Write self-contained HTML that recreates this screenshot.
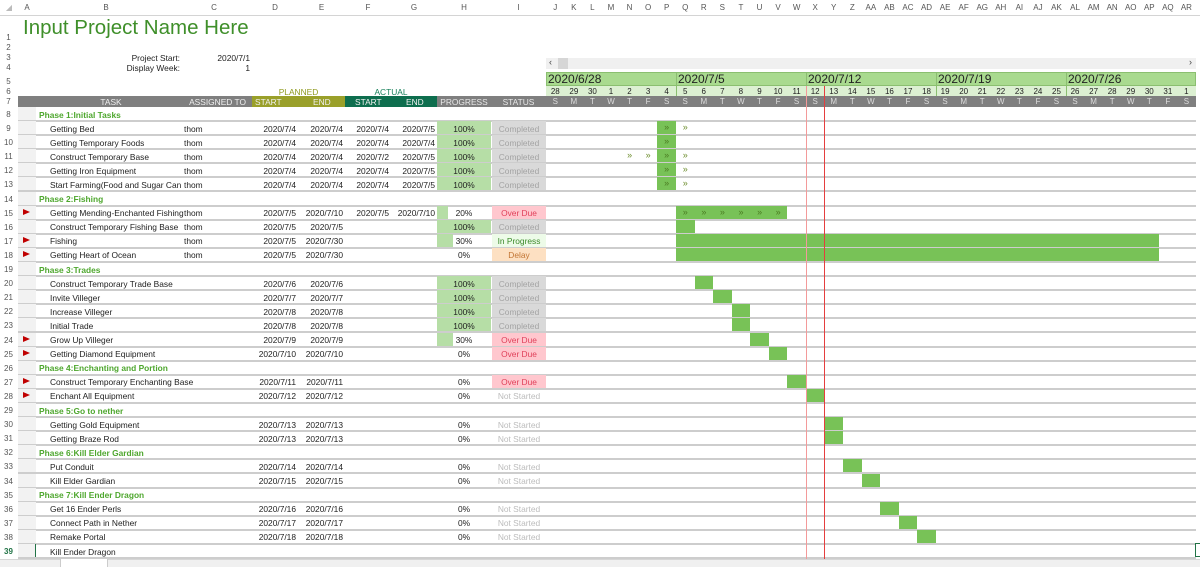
<!DOCTYPE html>
<html><head><meta charset="utf-8"><style>
*{margin:0;padding:0;box-sizing:border-box}
body{width:1200px;height:567px;overflow:hidden;background:#fff;font-family:"Liberation Sans",Tahoma,sans-serif;font-size:8.4px;color:#222;position:relative}
.abs{position:absolute}
.ch{position:absolute;top:0;left:0;width:1200px;height:16px;border-bottom:1px solid #d4d4d4;background:#fff}
.ch > span{position:absolute;top:3px;color:#555;font-size:8px;text-align:center}
.rn{position:absolute;left:0;width:17px;text-align:center;color:#555;font-size:8px}
.r{position:absolute;left:0;width:1200px;height:14.1px}
.r .ln{position:absolute;left:18px;right:4px;bottom:-1px;height:2px;background:#cdcdcd}
.r .A{position:absolute;left:18px;width:18px;top:0;height:100%;background:#f2f2f2}
.r i{position:absolute;left:0;width:17px;text-align:center;color:#555;font-style:normal;top:3px;font-size:8px}
.r b{position:absolute;font-weight:normal;top:2.5px;white-space:nowrap}
.t{left:50px}.a{left:184px}
.d{right:904px}.e{right:857px}.f{right:811px}.g{right:765px}
.ph{left:39px;color:#4ea72e;font-weight:bold!important}
.p{left:437px!important;width:54px;top:0!important;height:13px}
.p s{position:absolute;left:0;top:0;height:13px;background:#b6dea6}
.p u{position:absolute;left:0;width:54px;text-align:center;top:2.5px;text-decoration:none}
.s{left:492px!important;width:54px;top:0!important;height:13px;text-align:center;padding-top:2.5px}
.c{background:#d9d9d9;color:#a3a3a3}.o{background:#ffc7ce;color:#e0405a}.ip{background:#edfbe8;color:#3b8a2a}.dl{background:#fde0c2;color:#c27534}.ns{color:#bcbcbc}
.tri{position:absolute;left:23px;top:3.5px;width:0;height:0;border-left:7px solid #c00000;border-top:3.5px solid transparent;border-bottom:3.5px solid transparent}
em{position:absolute;top:0;height:13px;background:#78c257;font-style:normal;color:#4b7d22;font-size:9px;text-align:center;line-height:13px;width:18.6px}
em.w{background:none;color:#6f8f30}
.gh{position:absolute;left:546px;display:flex}
.gh span{width:18.57px;text-align:center;flex:none}
</style></head><body>
<div class="ch">
<span style="left:0;width:18px;color:#bbb">◢</span>
<span style="left:18px;width:18px">A</span><span style="left:36px;width:140px">B</span><span style="left:176px;width:76px">C</span><span style="left:252px;width:46px">D</span><span style="left:298px;width:47px">E</span><span style="left:345px;width:46px">F</span><span style="left:391px;width:46px">G</span><span style="left:437px;width:54px">H</span><span style="left:491px;width:55px">I</span>
<div class="gh" style="top:3px;color:#555;font-size:8px"><span>J</span><span>K</span><span>L</span><span>M</span><span>N</span><span>O</span><span>P</span><span>Q</span><span>R</span><span>S</span><span>T</span><span>U</span><span>V</span><span>W</span><span>X</span><span>Y</span><span>Z</span><span>AA</span><span>AB</span><span>AC</span><span>AD</span><span>AE</span><span>AF</span><span>AG</span><span>AH</span><span>AI</span><span>AJ</span><span>AK</span><span>AL</span><span>AM</span><span>AN</span><span>AO</span><span>AP</span><span>AQ</span><span>AR</span></div>
</div>
<div class="rn" style="top:33px">1</div><div class="rn" style="top:43px">2</div><div class="rn" style="top:53px">3</div><div class="rn" style="top:63px">4</div><div class="rn" style="top:77px">5</div><div class="rn" style="top:87px">6</div><div class="rn" style="top:97px">7</div>
<div class="abs" style="left:23px;top:16px;font-size:20.5px;color:#3f8f2a">Input Project Name Here</div>
<div class="abs" style="left:60px;width:120px;text-align:right;top:53px">Project Start:</div>
<div class="abs" style="left:60px;width:120px;text-align:right;top:63px">Display Week:</div>
<div class="abs" style="left:190px;width:60px;text-align:right;top:53px">2020/7/1</div>
<div class="abs" style="left:190px;width:60px;text-align:right;top:63px">1</div>
<!-- scrollbar -->
<div class="abs" style="left:546px;top:58px;width:650px;height:11px;background:#f0f0f0"></div>
<div class="abs" style="left:558px;top:58px;width:10px;height:11px;background:#d6d6d6"></div>
<div class="abs" style="left:549px;top:57px;color:#444;font-size:9px">‹</div>
<div class="abs" style="left:1189px;top:57px;color:#444;font-size:9px">›</div>
<!-- weeks -->
<div class="abs" style="left:546px;top:72px;width:650px;height:14px;background:#a9da8f;border:1px solid #8bbf70"></div>
<div class="abs" style="left:546px;top:86px;width:650px;height:10px;background:#dcf0d2"></div>
<div class="abs" style="left:676px;top:72px;width:1px;height:24px;background:#8bbf70"></div>
<div class="abs" style="left:806px;top:72px;width:1px;height:24px;background:#8bbf70"></div>
<div class="abs" style="left:936px;top:72px;width:1px;height:24px;background:#8bbf70"></div>
<div class="abs" style="left:1066px;top:72px;width:1px;height:24px;background:#8bbf70"></div>
<div class="abs" style="left:548px;top:72px;font-size:12px;color:#222">2020/6/28</div>
<div class="abs" style="left:678px;top:72px;font-size:12px;color:#222">2020/7/5</div>
<div class="abs" style="left:808px;top:72px;font-size:12px;color:#222">2020/7/12</div>
<div class="abs" style="left:938px;top:72px;font-size:12px;color:#222">2020/7/19</div>
<div class="abs" style="left:1068px;top:72px;font-size:12px;color:#222">2020/7/26</div>
<div class="gh" style="top:86.5px;font-size:8px"><span>28</span><span>29</span><span>30</span><span>1</span><span>2</span><span>3</span><span>4</span><span>5</span><span>6</span><span>7</span><span>8</span><span>9</span><span>10</span><span>11</span><span>12</span><span>13</span><span>14</span><span>15</span><span>16</span><span>17</span><span>18</span><span>19</span><span>20</span><span>21</span><span>22</span><span>23</span><span>24</span><span>25</span><span>26</span><span>27</span><span>28</span><span>29</span><span>30</span><span>31</span><span>1</span></div>
<div class="abs" style="left:252px;width:93px;text-align:center;top:86.5px;color:#8f9a1f">PLANNED</div>
<div class="abs" style="left:345px;width:92px;text-align:center;top:86.5px;color:#17805a">ACTUAL</div>
<!-- header row 7 -->
<div class="abs" style="left:18px;top:96px;width:1178px;height:11px;background:#7f7f7f"></div>
<div class="abs" style="left:252px;top:96px;width:93px;height:11px;background:#9aa02a"></div>
<div class="abs" style="left:345px;top:96px;width:92px;height:11px;background:#0e6e4e"></div>
<div class="abs" style="top:97px;left:36px;width:150px;text-align:center;color:#f0f0f0">TASK</div>
<div class="abs" style="top:97px;left:176px;width:70px;text-align:right;color:#f0f0f0">ASSIGNED TO</div>
<div class="abs" style="top:97px;left:255px;color:#f0f0f0">START</div>
<div class="abs" style="top:97px;left:313px;color:#f0f0f0">END</div>
<div class="abs" style="top:97px;left:355px;color:#f0f0f0">START</div>
<div class="abs" style="top:97px;left:406px;color:#f0f0f0">END</div>
<div class="abs" style="top:97px;left:437px;width:54px;text-align:center;color:#e8e8e8">PROGRESS</div>
<div class="abs" style="top:97px;left:491px;width:55px;text-align:center;color:#e8e8e8">STATUS</div>
<div class="gh" style="top:97px;color:#ddd;font-size:8px"><span>S</span><span>M</span><span>T</span><span>W</span><span>T</span><span>F</span><span>S</span><span>S</span><span>M</span><span>T</span><span>W</span><span>T</span><span>F</span><span>S</span><span>S</span><span>M</span><span>T</span><span>W</span><span>T</span><span>F</span><span>S</span><span>S</span><span>M</span><span>T</span><span>W</span><span>T</span><span>F</span><span>S</span><span>S</span><span>M</span><span>T</span><span>W</span><span>T</span><span>F</span><span>S</span></div>

<div class="r" style="top:107px"><div class="A"></div><i>8</i><b class="ph">Phase 1:Initial Tasks</b><div class="ln"></div></div>
<div class="r" style="top:121px"><div class="A"></div><i>9</i><b class="t">Getting Bed</b><b class="a">thom</b><b class="d">2020/7/4</b><b class="e">2020/7/4</b><b class="f">2020/7/4</b><b class="g">2020/7/5</b><b class="p"><s style="width:54px"></s><u>100%</u></b><b class="s c">Completed</b><em style="left:657.4px">»</em><em class="w" style="left:676px">»</em><div class="ln"></div></div>
<div class="r" style="top:135.1px"><div class="A"></div><i>10</i><b class="t">Getting Temporary Foods</b><b class="a">thom</b><b class="d">2020/7/4</b><b class="e">2020/7/4</b><b class="f">2020/7/4</b><b class="g">2020/7/4</b><b class="p"><s style="width:54px"></s><u>100%</u></b><b class="s c">Completed</b><em style="left:657.4px">»</em><div class="ln"></div></div>
<div class="r" style="top:149.2px"><div class="A"></div><i>11</i><b class="t">Construct Temporary Base</b><b class="a">thom</b><b class="d">2020/7/4</b><b class="e">2020/7/4</b><b class="f">2020/7/2</b><b class="g">2020/7/5</b><b class="p"><s style="width:54px"></s><u>100%</u></b><b class="s c">Completed</b><em class="w" style="left:620.3px">»</em><em class="w" style="left:638.9px">»</em><em style="left:657.4px">»</em><em class="w" style="left:676px">»</em><div class="ln"></div></div>
<div class="r" style="top:163.3px"><div class="A"></div><i>12</i><b class="t">Getting Iron Equipment</b><b class="a">thom</b><b class="d">2020/7/4</b><b class="e">2020/7/4</b><b class="f">2020/7/4</b><b class="g">2020/7/5</b><b class="p"><s style="width:54px"></s><u>100%</u></b><b class="s c">Completed</b><em style="left:657.4px">»</em><em class="w" style="left:676px">»</em><div class="ln"></div></div>
<div class="r" style="top:177.4px"><div class="A"></div><i>13</i><b class="t">Start Farming(Food and Sugar Can</b><b class="a">thom</b><b class="d">2020/7/4</b><b class="e">2020/7/4</b><b class="f">2020/7/4</b><b class="g">2020/7/5</b><b class="p"><s style="width:54px"></s><u>100%</u></b><b class="s c">Completed</b><em style="left:657.4px">»</em><em class="w" style="left:676px">»</em><div class="ln"></div></div>
<div class="r" style="top:191.5px"><div class="A"></div><i>14</i><b class="ph">Phase 2:Fishing</b><div class="ln"></div></div>
<div class="r" style="top:205.6px"><div class="A"></div><i>15</i><span class="tri"></span><b class="t">Getting Mending-Enchanted Fishing</b><b class="a">thom</b><b class="d">2020/7/5</b><b class="e">2020/7/10</b><b class="f">2020/7/5</b><b class="g">2020/7/10</b><b class="p"><s style="width:11px"></s><u>20%</u></b><b class="s o">Over Due</b><em style="left:676px;width:111.4px;background:#78c257"></em><em style="left:676px;background:none">»</em><em style="left:694.6px;background:none">»</em><em style="left:713.1px;background:none">»</em><em style="left:731.7px;background:none">»</em><em style="left:750.3px;background:none">»</em><em style="left:768.8px;background:none">»</em><div class="ln"></div></div>
<div class="r" style="top:219.7px"><div class="A"></div><i>16</i><b class="t">Construct Temporary Fishing Base</b><b class="a">thom</b><b class="d">2020/7/5</b><b class="e">2020/7/5</b><b class="p"><s style="width:54px"></s><u>100%</u></b><b class="s c">Completed</b><em style="left:676px"></em><div class="ln"></div></div>
<div class="r" style="top:233.8px"><div class="A"></div><i>17</i><span class="tri"></span><b class="t">Fishing</b><b class="a">thom</b><b class="d">2020/7/5</b><b class="e">2020/7/30</b><b class="p"><s style="width:16px"></s><u>30%</u></b><b class="s ip">In Progress</b><em style="left:676px;width:482.8px"></em><div class="ln"></div></div>
<div class="r" style="top:247.9px"><div class="A"></div><i>18</i><span class="tri"></span><b class="t">Getting Heart of Ocean</b><b class="a">thom</b><b class="d">2020/7/5</b><b class="e">2020/7/30</b><b class="p"><u>0%</u></b><b class="s dl">Delay</b><em style="left:676px;width:482.8px"></em><div class="ln"></div></div>
<div class="r" style="top:262px"><div class="A"></div><i>19</i><b class="ph">Phase 3:Trades</b><div class="ln"></div></div>
<div class="r" style="top:276.1px"><div class="A"></div><i>20</i><b class="t">Construct Temporary Trade Base</b><b class="d">2020/7/6</b><b class="e">2020/7/6</b><b class="p"><s style="width:54px"></s><u>100%</u></b><b class="s c">Completed</b><em style="left:694.6px"></em><div class="ln"></div></div>
<div class="r" style="top:290.2px"><div class="A"></div><i>21</i><b class="t">Invite Villeger</b><b class="d">2020/7/7</b><b class="e">2020/7/7</b><b class="p"><s style="width:54px"></s><u>100%</u></b><b class="s c">Completed</b><em style="left:713.1px"></em><div class="ln"></div></div>
<div class="r" style="top:304.3px"><div class="A"></div><i>22</i><b class="t">Increase Villeger</b><b class="d">2020/7/8</b><b class="e">2020/7/8</b><b class="p"><s style="width:54px"></s><u>100%</u></b><b class="s c">Completed</b><em style="left:731.7px"></em><div class="ln"></div></div>
<div class="r" style="top:318.4px"><div class="A"></div><i>23</i><b class="t">Initial Trade</b><b class="d">2020/7/8</b><b class="e">2020/7/8</b><b class="p"><s style="width:54px"></s><u>100%</u></b><b class="s c">Completed</b><em style="left:731.7px"></em><div class="ln"></div></div>
<div class="r" style="top:332.5px"><div class="A"></div><i>24</i><span class="tri"></span><b class="t">Grow Up Villeger</b><b class="d">2020/7/9</b><b class="e">2020/7/9</b><b class="p"><s style="width:16px"></s><u>30%</u></b><b class="s o">Over Due</b><em style="left:750.3px"></em><div class="ln"></div></div>
<div class="r" style="top:346.6px"><div class="A"></div><i>25</i><span class="tri"></span><b class="t">Getting Diamond Equipment</b><b class="d">2020/7/10</b><b class="e">2020/7/10</b><b class="p"><u>0%</u></b><b class="s o">Over Due</b><em style="left:768.8px"></em><div class="ln"></div></div>
<div class="r" style="top:360.7px"><div class="A"></div><i>26</i><b class="ph">Phase 4:Enchanting and Portion</b><div class="ln"></div></div>
<div class="r" style="top:374.8px"><div class="A"></div><i>27</i><span class="tri"></span><b class="t">Construct Temporary Enchanting Base</b><b class="d">2020/7/11</b><b class="e">2020/7/11</b><b class="p"><u>0%</u></b><b class="s o">Over Due</b><em style="left:787.4px"></em><div class="ln"></div></div>
<div class="r" style="top:388.9px"><div class="A"></div><i>28</i><span class="tri"></span><b class="t">Enchant All Equipment</b><b class="d">2020/7/12</b><b class="e">2020/7/12</b><b class="p"><u>0%</u></b><b class="s ns">Not Started</b><em style="left:806px"></em><div class="ln"></div></div>
<div class="r" style="top:403px"><div class="A"></div><i>29</i><b class="ph">Phase 5:Go to nether</b><div class="ln"></div></div>
<div class="r" style="top:417.1px"><div class="A"></div><i>30</i><b class="t">Getting Gold Equipment</b><b class="d">2020/7/13</b><b class="e">2020/7/13</b><b class="p"><u>0%</u></b><b class="s ns">Not Started</b><em style="left:824.6px"></em><div class="ln"></div></div>
<div class="r" style="top:431.2px"><div class="A"></div><i>31</i><b class="t">Getting Braze Rod</b><b class="d">2020/7/13</b><b class="e">2020/7/13</b><b class="p"><u>0%</u></b><b class="s ns">Not Started</b><em style="left:824.6px"></em><div class="ln"></div></div>
<div class="r" style="top:445.3px"><div class="A"></div><i>32</i><b class="ph">Phase 6:Kill Elder Gardian</b><div class="ln"></div></div>
<div class="r" style="top:459.4px"><div class="A"></div><i>33</i><b class="t">Put Conduit</b><b class="d">2020/7/14</b><b class="e">2020/7/14</b><b class="p"><u>0%</u></b><b class="s ns">Not Started</b><em style="left:843.1px"></em><div class="ln"></div></div>
<div class="r" style="top:473.5px"><div class="A"></div><i>34</i><b class="t">Kill Elder Gardian</b><b class="d">2020/7/15</b><b class="e">2020/7/15</b><b class="p"><u>0%</u></b><b class="s ns">Not Started</b><em style="left:861.7px"></em><div class="ln"></div></div>
<div class="r" style="top:487.6px"><div class="A"></div><i>35</i><b class="ph">Phase 7:Kill Ender Dragon</b><div class="ln"></div></div>
<div class="r" style="top:501.7px"><div class="A"></div><i>36</i><b class="t">Get 16 Ender Perls</b><b class="d">2020/7/16</b><b class="e">2020/7/16</b><b class="p"><u>0%</u></b><b class="s ns">Not Started</b><em style="left:880.3px"></em><div class="ln"></div></div>
<div class="r" style="top:515.8px"><div class="A"></div><i>37</i><b class="t">Connect Path in Nether</b><b class="d">2020/7/17</b><b class="e">2020/7/17</b><b class="p"><u>0%</u></b><b class="s ns">Not Started</b><em style="left:898.9px"></em><div class="ln"></div></div>
<div class="r" style="top:529.9px"><div class="A"></div><i>38</i><b class="t">Remake Portal</b><b class="d">2020/7/18</b><b class="e">2020/7/18</b><b class="p"><u>0%</u></b><b class="s ns">Not Started</b><em style="left:917.4px"></em><div class="ln"></div></div>
<div class="r" style="top:544px"><div class="A" style="border-right:1px solid #217346"></div><i style="color:#217346;font-weight:bold">39</i><b class="t">Kill Ender Dragon</b><div class="ln"></div></div>
<div class="abs" style="left:1195px;top:543px;width:5px;height:14px;border:1.5px solid #217346;border-right:none"></div>
<!-- red today lines -->
<div class="abs" style="left:806px;top:86px;width:1px;height:481px;background:#f39a9a"></div>
<div class="abs" style="left:824px;top:86px;width:1px;height:481px;background:#e53e3e"></div>
<!-- bottom tab bar -->
<div class="abs" style="left:0;top:559px;width:1200px;height:8px;background:#f0f0f0;border-top:1px solid #d6d6d6"></div>
<div class="abs" style="left:60px;top:559px;width:48px;height:8px;background:#fff;border-left:1px solid #ccc;border-right:1px solid #ccc"></div>
</body></html>
